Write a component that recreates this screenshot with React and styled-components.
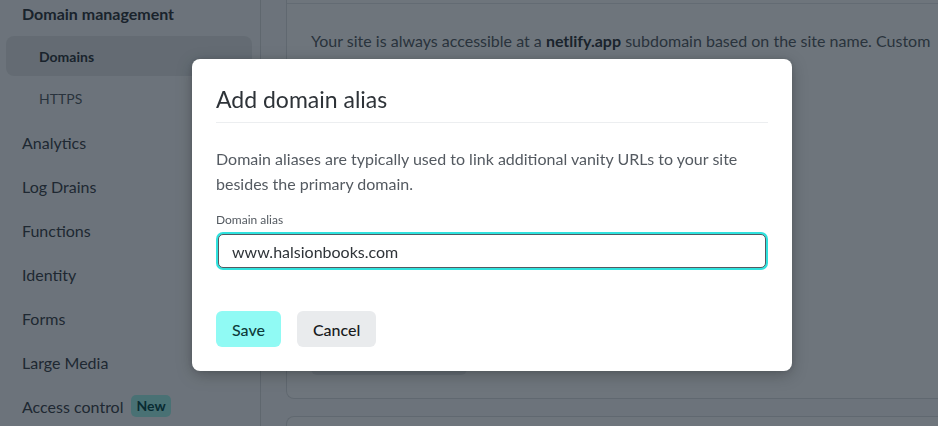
import React from 'react'
import styled, { createGlobalStyle } from 'styled-components'

const GlobalStyle = createGlobalStyle`
  html, body {
    margin: 0;
    padding: 0;
    background: #fbfbfc;
    font-family: Lato, "Noto Sans", sans-serif;
    color: #2e3338;
    overflow: hidden;
  }
  * { box-sizing: border-box; }
`;

const Page = styled.div`
  display: flex;
  width: 938px;
  height: 426px;
  overflow: hidden;
`;

const Sidebar = styled.nav`
  width: 261px;
  flex-shrink: 0;
  border-right: 1px solid #d9dbdd;
  padding: 2px 8px 0 6px;
  overflow: hidden;
`;

const GroupTitle = styled.div`
  font-size: 16px;
  font-weight: 700;
  line-height: 24px;
  padding-left: 16px;
  color: #2e3338;
  margin-bottom: 10px;
`;

const SubItem = styled.div`
  height: 40px;
  display: flex;
  align-items: center;
  padding-left: 33px;
  font-size: 14px;
  font-weight: ${p => (p.$active ? 700 : 400)};
  color: ${p => (p.$active ? '#2e3338' : '#545a61')};
  background: ${p => (p.$active ? '#e5e7e9' : 'transparent')};
  border-radius: 8px;
  margin-bottom: 2px;
`;

const NavItem = styled.div`
  height: 44px;
  display: flex;
  align-items: center;
  gap: 8px;
  padding-left: 16px;
  font-size: 16px;
  color: #3a4047;
`;

const Badge = styled.span`
  background: #a4f5ec;
  color: #014847;
  font-size: 14px;
  font-weight: 700;
  padding: 2px 5px;
  border-radius: 5px;
  line-height: 18px;
`;

const Main = styled.main`
  flex: 1;
  padding: 0 0 0 25px;
  display: flex;
  flex-direction: column;
  gap: 17px;
  margin-top: -40px;
`;

const Card = styled.section`
  background: #ffffff;
  border: 1px solid #dcdee0;
  border-right: none;
  border-radius: 8px 0 0 8px;
  flex-shrink: 0;
  height: ${p => p.$height}px;
`;

const CardHeader = styled.div`
  height: 43px;
  border-bottom: 1px solid #e4e6e8;
`;

const CardBody = styled.div`
  padding: 25px 24px 24px 24px;
  display: flex;
  flex-direction: column;
  gap: 16px;
`;

const CardText = styled.p`
  margin: 0;
  font-size: 16px;
  line-height: 24px;
  color: #545a61;
  white-space: nowrap;
  b { color: #2e3338; }
`;

const GhostButton = styled.div`
  width: 156px;
  height: 36px;
  border-radius: 6px;
  background: #e9ebed;
  margin-top: ${p => p.$top}px;
`;

const Overlay = styled.div`
  position: fixed;
  inset: 0;
  background: rgba(13, 25, 37, 0.6);
`;

const Modal = styled.div`
  position: fixed;
  left: 192px;
  top: 59px;
  width: 600px;
  background: #ffffff;
  border-radius: 8px;
  padding: 24px;
  box-shadow: 0 4px 16px rgba(0, 0, 0, 0.25), 0 0 4px rgba(0, 0, 0, 0.12);
`;

const ModalHeader = styled.div`
  border-bottom: 1px solid #eceef0;
  padding-bottom: 7px;
`;

const ModalTitle = styled.h2`
  margin: 0;
  font-size: 23px;
  line-height: 32px;
  font-weight: 400;
  color: #2e3338;
`;

const ModalText = styled.p`
  margin: 23px 0 0;
  font-size: 16px;
  line-height: 25px;
  color: #545a61;
`;

const Field = styled.label`
  display: flex;
  flex-direction: column;
  gap: 6px;
  margin-top: 16px;
`;

const FieldLabel = styled.span`
  font-size: 12px;
  line-height: 16px;
  color: #545a61;
`;

const Input = styled.input`
  margin: 0 2px;
  height: 34px;
  border: 1px solid #545a61;
  border-radius: 5px;
  box-shadow: 0 0 0 2px #30e2de;
  padding: 0 13px;
  font-family: inherit;
  font-size: 16px;
  color: #2e3338;
  outline: none;
  background: #ffffff;
`;

const Actions = styled.div`
  display: flex;
  gap: 16px;
  margin-top: 43px;
`;

const Button = styled.button`
  height: 36px;
  padding: 0 16px;
  border: none;
  border-radius: 6px;
  font-family: inherit;
  font-size: 16px;
  font-weight: 500;
  cursor: pointer;
  background: ${p => (p.$primary ? '#90faf4' : '#e9ebed')};
  color: ${p => (p.$primary ? '#0e3b3a' : '#181a1c')};
`;

const navItems = ['Analytics', 'Log Drains', 'Functions', 'Identity', 'Forms', 'Large Media']

export default function App() {
  return (
    <>
      <GlobalStyle />
      <Page>
        <Sidebar>
          <GroupTitle>Domain management</GroupTitle>
          <SubItem $active>Domains</SubItem>
          <SubItem>HTTPS</SubItem>
          {navItems.map(x => <NavItem key={x}>{x}</NavItem>)}
          <NavItem>Access control <Badge>New</Badge></NavItem>
        </Sidebar>
        <Main>
          <Card $height={439}>
            <CardHeader />
            <CardBody>
              <CardText>
                Your site is always accessible at a <b>netlify.app</b> subdomain based on the site name. Custom
                <br />
                domains allow visitors to access your site at your own domain.
              </CardText>
              <GhostButton $top={246} />
            </CardBody>
          </Card>
          <Card $height={120} />
        </Main>
      </Page>
      <Overlay />
      <Modal role="dialog">
        <ModalHeader>
          <ModalTitle>Add domain alias</ModalTitle>
        </ModalHeader>
        <ModalText>
          Domain aliases are typically used to link additional vanity URLs to your site
          <br />
          besides the primary domain.
        </ModalText>
        <Field>
          <FieldLabel>Domain alias</FieldLabel>
          <Input defaultValue="www.halsionbooks.com" />
        </Field>
        <Actions>
          <Button $primary>Save</Button>
          <Button>Cancel</Button>
        </Actions>
      </Modal>
    </>
  )
}
